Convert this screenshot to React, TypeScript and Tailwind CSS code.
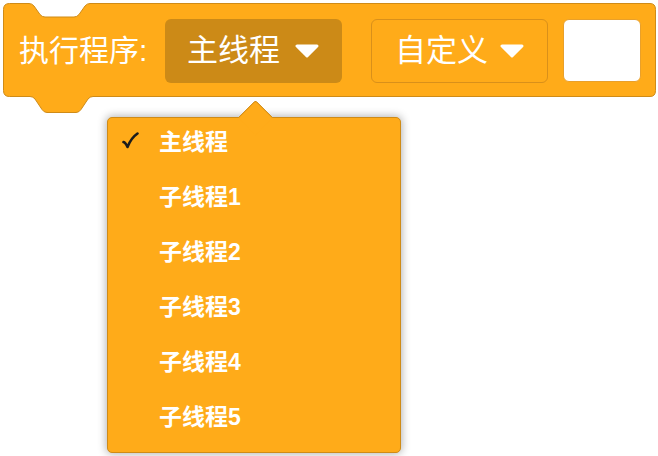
import React from "react";

const FONT = { fontFamily: '"Liberation Sans", "Noto Sans CJK SC", sans-serif' };

const Caret: React.FC = () => (
  <svg width="24" height="14" viewBox="0 0 24 14" className="shrink-0">
    <path
      d="M2 2 H22 L12 12 Z"
      fill="#ffffff"
      stroke="#ffffff"
      strokeWidth="3"
      strokeLinejoin="round"
    />
  </svg>
);

const Check: React.FC = () => (
  <svg width="17" height="17" viewBox="0 0 17 17" className="mt-[7px]">
    <path
      d="M1.5 10 Q3.5 10.5 5.5 15 Q9 6 15.5 1.5"
      fill="none"
      stroke="#1c1c1c"
      strokeWidth="2.6"
      strokeLinecap="round"
      strokeLinejoin="round"
    />
  </svg>
);

const BLOCK_PATH =
  "M 3.5 9.5 Q 3.5 3.5 9.5 3.5 H 29 Q 32 3.5 34 6 L 40 14.5 Q 42 17 45 17 H 74 Q 77 17 79 14.5 L 85 6 Q 87 3.5 90 3.5 H 650 Q 655.5 3.5 655.5 9.5 V 90.5 Q 655.5 96.5 650 96.5 H 93 Q 90 96.5 88 99 L 81 109.5 Q 79 112.5 76 112.5 H 47 Q 44 112.5 42 109.5 L 35 99 Q 33 96.5 30 96.5 H 9.5 Q 3.5 96.5 3.5 90.5 Z";

const items = ["主线程", "子线程1", "子线程2", "子线程3", "子线程4", "子线程5"];

export default function App() {
  return (
    <div className="w-[658px] h-[456px] bg-white overflow-hidden" style={FONT}>
      {/* block */}
      <div className="relative w-[658px] h-[114px]">
        <svg
          className="absolute inset-0"
          width="658"
          height="114"
          viewBox="0 0 658 114"
        >
          <path d={BLOCK_PATH} fill="#FFAB19" stroke="#CF8B17" strokeWidth="1" />
        </svg>
        <div className="relative flex items-center h-[101px] pl-[19px] text-white">
          <span className="w-[131px] text-[30px] leading-none">执行程序:</span>
          <div className="ml-[15px] flex items-center w-[177px] h-[64px] rounded-[6px] bg-[#CC8A17] pl-[22px]">
            <span className="text-[31px] leading-none">主线程</span>
            <span className="ml-[15px]">
              <Caret />
            </span>
          </div>
          <div className="ml-[29px] flex items-center w-[177px] h-[64px] rounded-[6px] border-[1.5px] border-[#D9901A] bg-[#FFAB19] pl-[23px]">
            <span className="text-[31px] leading-none">自定义</span>
            <span className="ml-[12px]">
              <Caret />
            </span>
          </div>
          <div className="ml-[15px] w-[78px] h-[63px] rounded-[6px] bg-white border border-[#E9A02A]" />
        </div>
      </div>

      {/* dropdown menu */}
      <div className="relative ml-[107px] mt-[3px] w-[294px] h-[336px] rounded-[5px] border border-[#CF8B17] bg-[#FFAB19] shadow-[0_0_8px_1px_rgba(0,0,0,0.3)]">
        <div className="h-full overflow-hidden pt-[7px]">
          {items.map((item, i) => (
            <div key={i} className="flex items-start h-[55px] pl-[14px]">
              <span className="w-[37px] h-[34px]">{i === 0 ? <Check /> : null}</span>
              <span className="leading-[34px] text-[23px] font-bold text-white">
                {item}
              </span>
            </div>
          ))}
        </div>
        <div className="absolute left-[135px] top-[-13px] w-[25px] h-[25px] rotate-45 rounded-tl-[3px] bg-[#FFAB19] border-t border-l border-[#CF8B17]" />
      </div>
    </div>
  );
}
